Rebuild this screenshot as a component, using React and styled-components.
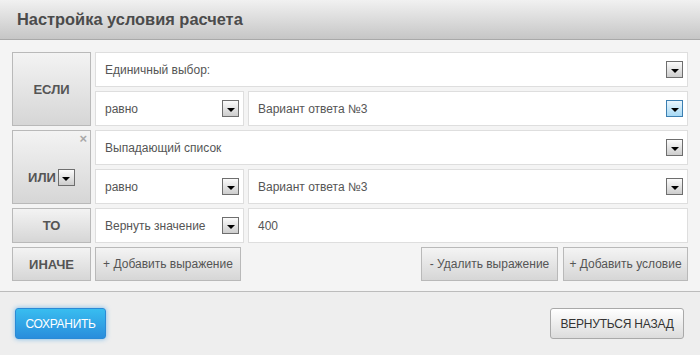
import styled, { createGlobalStyle } from "styled-components";

const GlobalStyle = createGlobalStyle`
  body {
    margin: 0;
    background: #eeeeee;
    font-family: "Liberation Sans", Arial, sans-serif;
  }
`;

const Panel = styled.div`
  width: 700px;
  height: 355px;
  display: flex;
  flex-direction: column;
  background: #eeeeee;
`;

const Header = styled.div`
  height: 39px;
  display: flex;
  align-items: center;
  padding-left: 17px;
  background: linear-gradient(#f1f1f1, #c6c6c6);
  border-bottom: 1px solid #a9a9a9;
`;

const Title = styled.h1`
  margin: 0;
  font-size: 16.4px;
  font-weight: bold;
  color: #4b4b4b;
`;

const Body = styled.div`
  background: #f4f4f4;
  padding: 12px 12px 10px;
  display: flex;
  flex-direction: column;
  gap: 4px;
  border-bottom: 1px solid #bcbcbc;
`;

const Group = styled.div`
  display: grid;
  grid-template-columns: 79px 1fr;
  gap: 4px;
`;

const Label = styled.div`
  position: relative;
  box-sizing: border-box;
  display: flex;
  align-items: center;
  justify-content: center;
  gap: 2px;
  padding-top: ${(p) => p.$shift || 0}px;
  border: 1px solid #b9b9b9;
  background: linear-gradient(#f3f3f3, #d6d6d6);
  color: #555;
  font-size: 13px;
  font-weight: bold;
  text-transform: uppercase;
`;

const Close = styled.span`
  position: absolute;
  top: 1px;
  right: 3px;
  font-size: 13px;
  line-height: 13px;
  font-weight: bold;
  color: #a8a8a8;
`;

const Column = styled.div`
  display: flex;
  flex-direction: column;
  gap: 4px;
`;

const Row = styled.div`
  display: flex;
  gap: 4px;
`;

const Field = styled.div`
  box-sizing: border-box;
  height: 35px;
  flex: ${(p) => (p.$width ? `0 0 ${p.$width}px` : p.$grow ? "1 1 0" : "none")};
  display: flex;
  align-items: center;
  justify-content: space-between;
  padding: 0 4px 0 9px;
  background: #fff;
  border: 1px solid #dedede;
  color: #555;
  font-size: 12px;
`;

const Arrow = styled.span`
  box-sizing: border-box;
  width: 17px;
  height: 17px;
  display: flex;
  align-items: center;
  justify-content: center;
  border: 1px solid ${(p) => (p.$active ? "#3c7fb1" : "#6e6e6e")};
  background: ${(p) =>
    p.$active
      ? "linear-gradient(#eaf6fd, #a7d9f5)"
      : "linear-gradient(#fbfbfb, #cdcdcd)"};
  &::after {
    content: "";
    margin-top: 2px;
    border-left: 4px solid transparent;
    border-right: 4px solid transparent;
    border-top: 4px solid #000;
  }
`;

const Actions = styled.div`
  display: flex;
  gap: 5px;
  align-items: center;
`;

const Spacer = styled.div`
  flex: 1;
`;

const ActionButton = styled.button`
  box-sizing: border-box;
  height: 34px;
  padding: 0;
  white-space: nowrap;
  width: ${(p) => p.$width}px;
  font-family: inherit;
  font-size: 12px;
  color: #555;
  border: 1px solid #b9b9b9;
  background: linear-gradient(#f4f4f4, #d6d6d6);
  cursor: pointer;
`;

const Footer = styled.div`
  flex: 1;
  display: flex;
  justify-content: space-between;
  align-items: flex-start;
  padding: 16px 16px 0 15px;
  background: #eeeeee;
`;

const SaveButton = styled.button`
  box-sizing: border-box;
  width: 91px;
  height: 31px;
  border: 1px solid #2a8ad6;
  border-radius: 3px;
  background: linear-gradient(#38bdf0, #2a8ddc);
  box-shadow: 0 0 5px rgba(40, 150, 230, 0.6);
  color: #fff;
  font-family: inherit;
  font-size: 12px;
  letter-spacing: -0.3px;
  text-transform: uppercase;
  cursor: pointer;
`;

const BackButton = styled.button`
  box-sizing: border-box;
  width: 134px;
  height: 31px;
  border: 1px solid #a9a9a9;
  border-radius: 3px;
  background: linear-gradient(#ffffff, #dcdcdc);
  color: #333;
  font-family: inherit;
  font-size: 12px;
  letter-spacing: -0.2px;
  text-transform: uppercase;
  cursor: pointer;
`;

const Select = ({ children, width, grow, active }) => (
  <Field $width={width} $grow={grow}>
    <span>{children}</span>
    <Arrow $active={active} />
  </Field>
);

export default function App() {
  return (
    <>
      <GlobalStyle />
      <Panel>
        <Header>
          <Title>Настройка условия расчета</Title>
        </Header>
        <Body>
          <Group>
            <Label>если</Label>
            <Column>
              <Select>Единичный выбор:</Select>
              <Row>
                <Select width={149}>равно</Select>
                <Select grow active>Вариант ответа №3</Select>
              </Row>
            </Column>
          </Group>
          <Group>
            <Label $shift={21}>
              <Close>×</Close>
              или
              <Arrow />
            </Label>
            <Column>
              <Select>Выпадающий список</Select>
              <Row>
                <Select width={149}>равно</Select>
                <Select grow>Вариант ответа №3</Select>
              </Row>
            </Column>
          </Group>
          <Group>
            <Label>то</Label>
            <Row>
              <Select width={149}>Вернуть значение</Select>
              <Field $grow>400</Field>
            </Row>
          </Group>
          <Group>
            <Label>иначе</Label>
            <Actions>
              <ActionButton $width={146}>+ Добавить выражение</ActionButton>
              <Spacer />
              <ActionButton $width={137}>- Удалить выражение</ActionButton>
              <ActionButton $width={125}>+ Добавить условие</ActionButton>
            </Actions>
          </Group>
        </Body>
        <Footer>
          <SaveButton>Сохранить</SaveButton>
          <BackButton>Вернуться назад</BackButton>
        </Footer>
      </Panel>
    </>
  );
}
